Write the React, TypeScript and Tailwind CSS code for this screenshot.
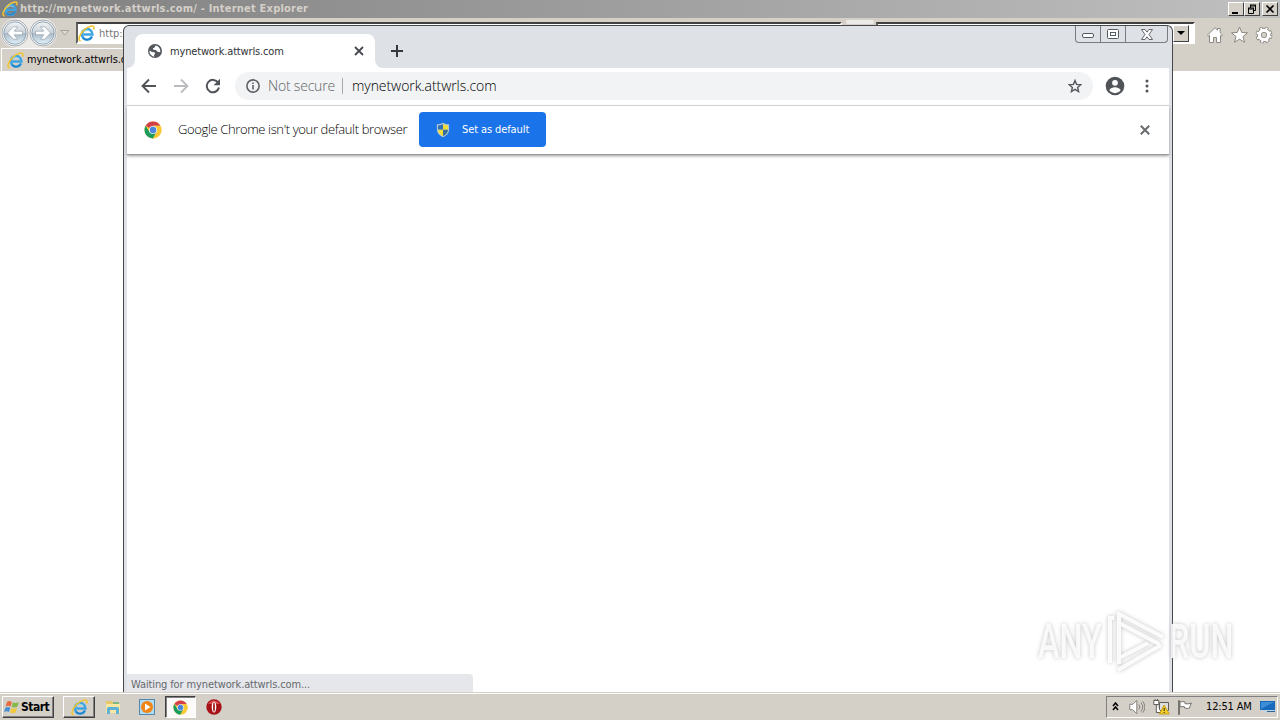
import type { ReactNode } from 'react';
import { clsx } from 'clsx';

const tahoma = "font-['DejaVu_Sans_Condensed','DejaVu_Sans',sans-serif]";

function IeLogo({ size = 16 }: { size?: number }) {
  return (
    <svg width={size} height={size} viewBox="0 0 16 16" fill="none" className="shrink-0">
      <path d="M13.2 10.8A5 5 0 1 1 13.6 8.9H5" stroke="#3fa4e2" strokeWidth="2.4" />
      <path d="M13 10.8A5 5 0 0 1 4.6 12" stroke="#1c7cc4" strokeWidth="1.1" />
      <path d="M5.4 6.2Q8.4 3.6 11.6 6" stroke="#8fd4f6" strokeWidth="0.9" />
      <path d="M2.6 14.9C-.6 14.6 1.2 9 5.8 4.6 9.6 1.2 14.6-.3 15 2.1c.1.8-.1 1.5-.5 2.2" stroke="#f0c534" strokeWidth="1.5" />
    </svg>
  );
}

function ChromeLogo({ size = 18 }: { size?: number }) {
  return (
    <svg width={size} height={size} viewBox="0 0 18 18" className="shrink-0">
      <circle cx="9" cy="9" r="8.5" fill="#f9c938" />
      <path d="M9 9 1.6 4.8A8.5 8.5 0 0 1 16.4 4.8H9z" fill="#d2404a" />
      <path d="M1.6 4.8A8.5 8.5 0 0 0 9 17.5L12.6 11 9 9 5.4 11z" fill="#1c9c5c" />
      <path d="M9 4.8h7.4A8.5 8.5 0 0 1 9 17.5l3.6-6.4z" fill="#f9c938" />
      <circle cx="9" cy="9" r="4" fill="#e9eff5" />
      <circle cx="9" cy="9" r="3.2" fill="#4a86dc" />
    </svg>
  );
}

function RoundArrow({ flip }: { flip?: boolean }) {
  return (
    <svg width="28" height="28" viewBox="0 0 28 28" className={clsx('shrink-0', flip && '-scale-x-100')}>
      <defs>
        <linearGradient id="orb" x1="0" y1="0" x2="0" y2="1">
          <stop offset="0" stopColor="#f1f3f5" />
          <stop offset=".48" stopColor="#ccd3d9" />
          <stop offset=".52" stopColor="#aab9c6" />
          <stop offset="1" stopColor="#e2f3fb" />
        </linearGradient>
      </defs>
      <circle cx="14" cy="14" r="13" fill="#f5f7f8" stroke="#a9adb1" />
      <circle cx="14" cy="14" r="11.2" fill="url(#orb)" stroke="#7c94a6" strokeWidth=".8" />
      <path d="M21.5 12.2h-8.3l3.3-4.4h-4.2L6.5 14l5.8 6.2h4.2l-3.3-4.4h8.3z" fill="#fff" stroke="#8798a5" strokeWidth=".6" />
    </svg>
  );
}

function ClassicButton({ children }: { children: ReactNode }) {
  return (
    <div className="flex h-[14px] w-4 items-center justify-center border border-t-white border-r-[#404040] border-b-[#404040] border-l-white bg-[#d4d0c8]">
      {children}
    </div>
  );
}

function ExplorerWindow() {
  return (
    <div className="flex h-[692px] flex-col bg-white">
      <div className="flex h-[18px] items-center bg-linear-to-r from-[#808080] to-[#c0c0c0] pr-0.5 pl-0.5">
        <IeLogo size={16} />
        <span className="ml-0.5 w-[300px] text-[11px] leading-[18px] font-bold tracking-[0.21px] whitespace-nowrap text-[#d4d0c8]">
          http://mynetwork.attwrls.com/ - Internet Explorer
        </span>
        <div className="ml-auto flex">
          <ClassicButton>
            <svg width="12" height="10"><path d="M2 8h6v2H2z" /></svg>
          </ClassicButton>
          <ClassicButton>
            <svg width="12" height="10" fill="none" stroke="#000">
              <path d="M4 1h6M4 2h6M4.5 1v3M9.5 1v5.5H7M2 4h6M2 5h6M2.5 4v5.5h5V4" />
            </svg>
          </ClassicButton>
          <div className="ml-0.5">
            <ClassicButton>
              <svg width="12" height="10" stroke="#000" strokeWidth="1.7"><path d="m2.5 1.5 7 7m0-7-7 7" /></svg>
            </ClassicButton>
          </div>
        </div>
      </div>

      <div className="flex h-[30px] items-center bg-[#d4d0c8] pl-px">
        <div className="flex h-[30px] w-[56px] items-center rounded-full bg-[#eceae6]">
          <RoundArrow />
          <RoundArrow flip />
        </div>
        <svg width="10" height="6" className="ml-[3px] shrink-0" fill="#dedbd5" stroke="#a5a29c"><path d="M.8.5h8L4.8 5z" /></svg>
        <div className="ml-[6px] flex h-[22px] w-[766px] items-center border-2 border-t-[#404040] border-r-white border-b-white border-l-[#606060] bg-white">
          <IeLogo size={17} />
          <span className="ml-[4px] text-[11px] leading-[19px] text-[#777]">http://mynetwork.attwrls.com/</span>
        </div>
        <div className="mb-[22px] ml-1 h-1 w-7 rounded bg-[#eceae6]" />
        <div className="ml-0.5 flex h-[22px] w-[319px] items-center justify-end border-2 border-t-[#404040] border-r-white border-b-white border-l-[#606060] bg-white">
          <div className="mr-1 flex h-[17px] w-4 items-center justify-center border border-t-white border-r-[#404040] border-b-[#404040] border-l-white bg-[#d4d0c8]">
            <svg width="8" height="4"><path d="M0 0h8L4 4z" /></svg>
          </div>
        </div>
        <div className="mt-1 ml-[11px] flex gap-[6px]">
          <svg width="18" height="18" viewBox="0 0 18 18" fill="#fff" stroke="#8b8882">
            <path d="M1.5 9 9 1.7l2.5 2.4V2.5h2.7v4.3L16.5 9l-1.2 1.1-.8-.7v7.1h-4v-5h-3v5h-4V9.4l-.8.7z" />
          </svg>
          <svg width="19" height="18" viewBox="0 0 19 18" fill="#fff" stroke="#8b8882">
            <path d="m9.5 1 2.2 5.4 5.8.4-4.5 3.7 1.5 5.8-5-3.2-5 3.2L6 10.5 1.5 6.8l5.8-.4z" />
          </svg>
          <svg width="18" height="18" viewBox="0 0 18 18" fill="none">
            <circle cx="9" cy="9" r="6.5" stroke="#85827c" strokeWidth="3.8" strokeDasharray="3.2 1.905" />
            <circle cx="9" cy="9" r="4.6" stroke="#85827c" strokeWidth="4.6" />
            <circle cx="9" cy="9" r="6.3" stroke="#fff" strokeWidth="2.8" strokeDasharray="1.9 3.048" strokeDashoffset="-.6" />
            <circle cx="9" cy="9" r="4.6" stroke="#fff" strokeWidth="3.2" />
          </svg>
        </div>
      </div>

      <div className="flex h-[23px] shrink-0 bg-[#d4d0c8]">
        <div className="ml-px flex w-[160px] items-center border-t border-l border-white pl-[5px]">
          <IeLogo size={17} />
          <span className="ml-[3px] text-[11px] tracking-[-0.12px] text-black">mynetwork.attwrls.com</span>
        </div>
      </div>
    </div>
  );
}

function TabStrip() {
  return (
    <div className="flex h-[42px] pl-2">
      <div className="relative mt-2 flex h-[34px] w-[240px] items-center rounded-t-lg bg-white pl-3">
        <svg width="8" height="8" className="absolute bottom-0 -left-2" fill="#fff"><path d="M8 0v8H0a8 8 0 0 0 8-8z" /></svg>
        <svg width="8" height="8" className="absolute -right-2 bottom-0" fill="#fff"><path d="M0 0v8h8a8 8 0 0 1-8-8z" /></svg>
        <svg width="16" height="16" viewBox="0 0 16 16">
          <circle cx="8" cy="8" r="7" fill="#54585d" />
          <path d="M2.5 7.4 5 9l2.6.2.4 1.7-1 1 .3 1.8A5.6 5.6 0 0 1 2.5 7.4zM8.6 2.5l-1 1.9-1.8.9.6 1.5 2.5.2 1.5 1.8 2.8.5a5.6 5.6 0 0 0-4.6-6.8z" fill="#fff" />
        </svg>
        <span className="ml-[7px] w-[180px] pt-0.5 text-[11px] leading-[18px] tracking-[-0.16px] text-[#303236]">mynetwork.attwrls.com</span>
        <svg width="10" height="10" className="ml-1 shrink-0" stroke="#45494d" strokeWidth="1.8"><path d="m1 1 8 8m0-8-8 8" /></svg>
      </div>
      <svg width="12" height="12" className="mt-[19px] ml-4" stroke="#35383c" strokeWidth="2"><path d="M6 0v12M0 6h12" /></svg>
    </div>
  );
}

function WindowControls() {
  return (
    <div className="absolute top-0 right-1 flex h-[17px] w-[93px] divide-x divide-[#777b82] rounded-b border border-t-0 border-[#777b82] bg-[#dee1e6]">
      <div className="flex w-[25px] items-center justify-center">
        <svg width="13" height="6" className="mt-1" fill="#fff" stroke="#555960"><rect x=".5" y=".5" width="11" height="4" rx="1.5" /></svg>
      </div>
      <div className="flex w-[25px] items-center justify-center">
        <svg width="12" height="10" fill="#fff" stroke="#555960"><rect x=".5" y=".5" width="11" height="9" rx="1" /><rect x="3.5" y="3.5" width="5" height="3" /></svg>
      </div>
      <div className="flex flex-1 items-center justify-center">
        <svg width="12" height="11" fill="#fff" stroke="#555960" strokeWidth=".9"><path d="M.5.5H4l2 2.7L8 .5h3.5L8 5.5l3.5 5H8L6 7.8l-2 2.7H.5l3.5-5z" /></svg>
      </div>
    </div>
  );
}

function Toolbar() {
  return (
    <div className="flex h-[38px] items-center border-b border-[#dadce0] bg-white pb-px pl-[14px]">
      <svg width="16" height="16" fill="none" stroke="#505458" strokeWidth="1.9"><path d="M15 8H2M8 1.5 1.5 8 8 14.5" /></svg>
      <svg width="16" height="16" className="ml-4" fill="none" stroke="#b9bbbe" strokeWidth="1.8"><path d="M1 8h13M8 1.5 14.5 8 8 14.5" /></svg>
      <svg width="16" height="16" className="ml-4" fill="none" stroke="#505458" strokeWidth="2">
        <path d="M13.2 4.7A6.2 6.2 0 1 0 14 9.6" />
        <path d="M15 .8v6.4H8.6z" fill="#505458" stroke="none" />
      </svg>
      <div className="ml-[14px] flex h-7 w-[858px] items-center rounded-full bg-[#f1f3f4] pl-[11px]">
        <svg width="14" height="14" fill="none" stroke="#5f6368" strokeWidth="1.6"><circle cx="7" cy="7" r="6.1" /><path d="M7 6v4.5M7 3.4v1.5" /></svg>
        <span className="ml-[8px] w-[67px] font-['Open_Sans',sans-serif] text-[14px] leading-[18px] font-light tracking-[-0.2px] whitespace-nowrap text-[#5f6368]">Not secure</span>
        <div className="ml-[7px] h-4 w-px bg-[#a5a8ac]" />
        <span className="ml-[9px] font-['Open_Sans',sans-serif] text-[14px] leading-[18px] font-light tracking-[-0.07px] text-black">mynetwork.attwrls.com</span>
        <svg width="14" height="14" viewBox="0 0 16 16" className="mr-[11px] ml-auto" fill="none" stroke="#55595d" strokeWidth="1.6">
          <path d="m8 1.7 1.8 4.4 4.8.4L11 9.6l1.1 4.7L8 11.8l-4.1 2.5L5 9.6 1.4 6.5l4.8-.4z" />
        </svg>
      </div>
      <svg width="20" height="20" viewBox="0 0 20 20" className="ml-3">
        <circle cx="10" cy="10" r="9.3" fill="#505458" />
        <circle cx="10" cy="6.8" r="2.9" fill="#fff" />
        <path d="M4.4 14.2c.4-2.1 3.7-3 5.6-3s5.2.9 5.6 3a6.8 6.8 0 0 1-11.2 0z" fill="#fff" />
      </svg>
      <svg width="4" height="14" className="ml-[20px]" fill="#505458"><circle cx="2" cy="2" r="1.5" /><circle cx="2" cy="7" r="1.5" /><circle cx="2" cy="12" r="1.5" /></svg>
    </div>
  );
}

function DefaultBrowserBar() {
  return (
    <div className="z-1 flex h-[49px] items-center border-b border-[#999] bg-white pb-px pl-[17px] shadow-[0_1px_3px_#999]">
      <ChromeLogo />
      <span className="ml-4 w-[229px] pb-0.5 font-['Open_Sans',sans-serif] text-[13px] leading-[18px] font-light tracking-[-0.37px] whitespace-nowrap text-black">
        Google Chrome isn't your default browser
      </span>
      <button className="ml-3 flex h-[35px] w-[127px] items-center rounded bg-[#1a73e8] pl-[17px] text-white">
        <svg width="14" height="16" viewBox="0 0 14 16">
          <path d="M7 .7c2 1.3 4 1.6 6.1 1.6v5.2c0 3.7-2.2 6-6.1 7.8C3.1 13.5.9 11.2.9 7.5V2.3C3 2.3 5 2 7 .7z" fill="#b8cad2" />
          <path d="M7 2v5.8H2V3.5C4 3.4 5.4 3 7 2z" fill="#3273b8" />
          <path d="M7 2c1.6 1 3 1.4 5 1.5v4.3H7z" fill="#f1dd3c" />
          <path d="M2 7.8h5v6.3c-3-1.4-4.9-3.2-5-6.3z" fill="#f1dd3c" />
          <path d="M7 7.8h5c-.1 3.1-2 4.9-5 6.3z" fill="#336f98" />
        </svg>
        <span className="ml-3 pt-px text-[11px] tracking-[-0.1px] whitespace-nowrap">Set as default</span>
      </button>
      <svg width="10" height="10" className="mr-[19px] ml-auto" stroke="#686b6f" strokeWidth="2"><path d="m.8.8 8.4 8.4m0-8.4L.8 9.2" /></svg>
    </div>
  );
}

function ChromeWindow() {
  return (
    <div className="absolute top-[25px] left-[123px] flex h-[667px] w-[1050px] flex-col rounded-t-md border border-b-0 border-[#45474a] bg-[#dee1e6] pr-[3px] pl-[3px]">
      <TabStrip />
      <WindowControls />
      <Toolbar />
      <DefaultBrowserBar />
      <div className="flex flex-1 items-end bg-white">
        <div className="h-[18px] w-[346px] rounded-tr bg-[#e5e7eb] pl-[4px] text-[11px] leading-[21px] tracking-[-0.12px] text-[#66696d]">
          Waiting for mynetwork.attwrls.com...
        </div>
      </div>
    </div>
  );
}

function Watermark() {
  return (
    <div className="absolute top-[608px] left-[1038px] flex h-[66px] w-[200px] items-center font-['Roboto',sans-serif] text-[49px] leading-none font-medium text-white/85 drop-shadow-[0_0_2px_#bbb]">
      <span className="w-[67px] origin-left scale-x-[0.66] whitespace-nowrap">ANY</span>
      <svg width="62" height="64" viewBox="0 0 62 64" className="shrink-0" fill="none" stroke="#fff" strokeWidth="4" opacity=".9">
        <path d="M5 54V9h4M14 55V5l44 23M14 14l40 21M13 61l43-25M14 49l29-15" />
      </svg>
      <span className="ml-0.5 w-[64px] origin-left scale-x-[0.66] whitespace-nowrap">RUN</span>
    </div>
  );
}

function Taskbar() {
  return (
    <div className="flex h-7 items-center border-t border-[#d4d0c8] bg-[#d4d0c8] pt-px pl-0.5 shadow-[inset_0_1px_0_#fff]">
      <div className="flex h-[22px] w-[52px] items-center border border-t-white border-r-[#404040] border-b-[#404040] border-l-white shadow-[inset_-1px_-1px_0_#808080]">
        <svg width="16" height="16" viewBox="0 0 16 16" className="ml-px shrink-0">
          <path d="M3 3c2-1.5 3-1 4.8-.1L6.6 7.4c-2-1-3.2-.8-4.9.2z" fill="#e7693c" />
          <path d="M8.8 3.3c2 1 3.8 1 6 0l-1.4 4.4c-2 1-3.8.9-5.7 0z" fill="#86b94a" />
          <path d="M1.4 8.7c1.8-1 3-1.1 4.9-.2L5 13c-2-1-3-1-5 .1z" fill="#478fd3" />
          <path d="M7.3 8.9c2 1 3.7 1 5.7 0l-1.4 4.5c-2 .9-3.6.9-5.5 0z" fill="#f0c73d" />
        </svg>
        <span className="ml-px text-[12px] font-bold tracking-[-0.5px] text-black">Start</span>
      </div>
      <div className="ml-[9px] flex h-[22px] w-8 items-center justify-center border border-t-white border-r-[#404040] border-b-[#404040] border-l-white shadow-[inset_-1px_-1px_0_#808080]">
        <IeLogo size={17} />
      </div>
      <svg width="16" height="16" viewBox="0 0 16 16" className="ml-[10px]">
        <path d="M1 2h6l1 2h6v10H1z" fill="#e6c86b" />
        <path d="M1 5h14v9H1z" fill="#f7e7a4" />
        <path d="M2 15V9.5Q2 8 3.5 8h9Q14 8 14 9.5V15h-3v-4H5v4z" fill="#5fb1d5" />
        <path d="M8 3h6v2H8z" fill="#7fb883" />
      </svg>
      <svg width="16" height="16" viewBox="0 0 16 16" className="ml-[18px]">
        <rect x=".5" y=".5" width="15" height="15" fill="#b5d9ee" stroke="#4e8ab3" />
        <circle cx="8" cy="8" r="6" fill="#ef8514" />
        <path d="M6 4.5v7L11.5 8z" fill="#fff" />
      </svg>
      <div className="ml-[10px] flex h-[22px] w-[31px] items-center justify-center border border-t-[#404040] border-r-white border-b-white border-l-[#404040] bg-[#fbfaf8] shadow-[inset_1px_1px_0_#808080]">
        <ChromeLogo size={15} />
      </div>
      <svg width="16" height="16" viewBox="0 0 16 16" className="ml-[10px]">
        <circle cx="8" cy="8" r="7.7" fill="#a71218" />
        <path d="M2 5a7 7 0 0 1 12 0Z" fill="#d6474a" />
        <ellipse cx="8" cy="8" rx="2.3" ry="5.5" fill="#fff" />
        <ellipse cx="8" cy="8" rx=".9" ry="4.7" fill="#a71218" />
      </svg>
      <div className="mr-0.5 ml-auto flex h-[22px] w-[172px] items-center border border-t-[#808080] border-r-white border-b-white border-l-[#808080] pl-[5px]">
        <svg width="7" height="9" className="mb-0.5" fill="none" stroke="#000" strokeWidth="1.5"><path d="m1 4 2.5-3L6 4M1 8l2.5-3L6 8" /></svg>
        <svg width="16" height="16" viewBox="0 0 16 16" className="ml-[10px]" fill="none" stroke="#85827d">
          <path d="M.8 5.3h3l4-4v13.4l-4-4h-3z" fill="#fff" />
          <path d="M9.8 5.5q2 2.5 0 5M11.8 3.5q4 4.5 0 9M13.7 2.2q4.4 5.8 0 11.6" />
        </svg>
        <svg width="17" height="16" viewBox="0 0 17 16" className="ml-2" fill="none" stroke="#605e5a">
          <path d="M6.5 3.5h9v8h-9z" fill="#ddd" />
          <path d="M.8 1.5h5v4h-5zM2 0v2M4.5 0v2M3.3 5.5v8H8" fill="#fff" />
          <path d="m11.2 6 5 9H6.3z" fill="#f5ce28" stroke="#c79e20" />
          <path d="M11.2 9v3m0 1v1" stroke="#222" />
        </svg>
        <svg width="16" height="15" viewBox="0 0 16 15" className="ml-[7px]" fill="#fff" stroke="#77746f">
          <path d="M1.5.5h1v14h-1zM3 2q3-1 5 0v1.7q3 .7 6.5-.7-1.3 2-2 5-2 1-5 0V6.8Q5 6 3 7z" />
        </svg>
        <span className="ml-[13px] w-[46px] pt-px text-[11px] tracking-[-0.15px] whitespace-nowrap text-black">12:51 AM</span>
        <svg width="16" height="14" viewBox="0 0 16 14" className="ml-[8px] shrink-0">
          <path d="M0 1h15v9H0z" fill="#1769bb" />
          <path d="M1 2h13L1 9z" fill="#3d8cd6" />
          <path d="M3 10h13v2.5H4z" fill="#bfd2e2" />
          <path d="M7 11h8v1H7z" fill="#316494" />
        </svg>
      </div>
    </div>
  );
}

export default function App() {
  return (
    <div className={clsx('relative h-[720px] w-[1280px] overflow-hidden bg-white', tahoma)}>
      <ExplorerWindow />
      <ChromeWindow />
      <Watermark />
      <Taskbar />
    </div>
  );
}
